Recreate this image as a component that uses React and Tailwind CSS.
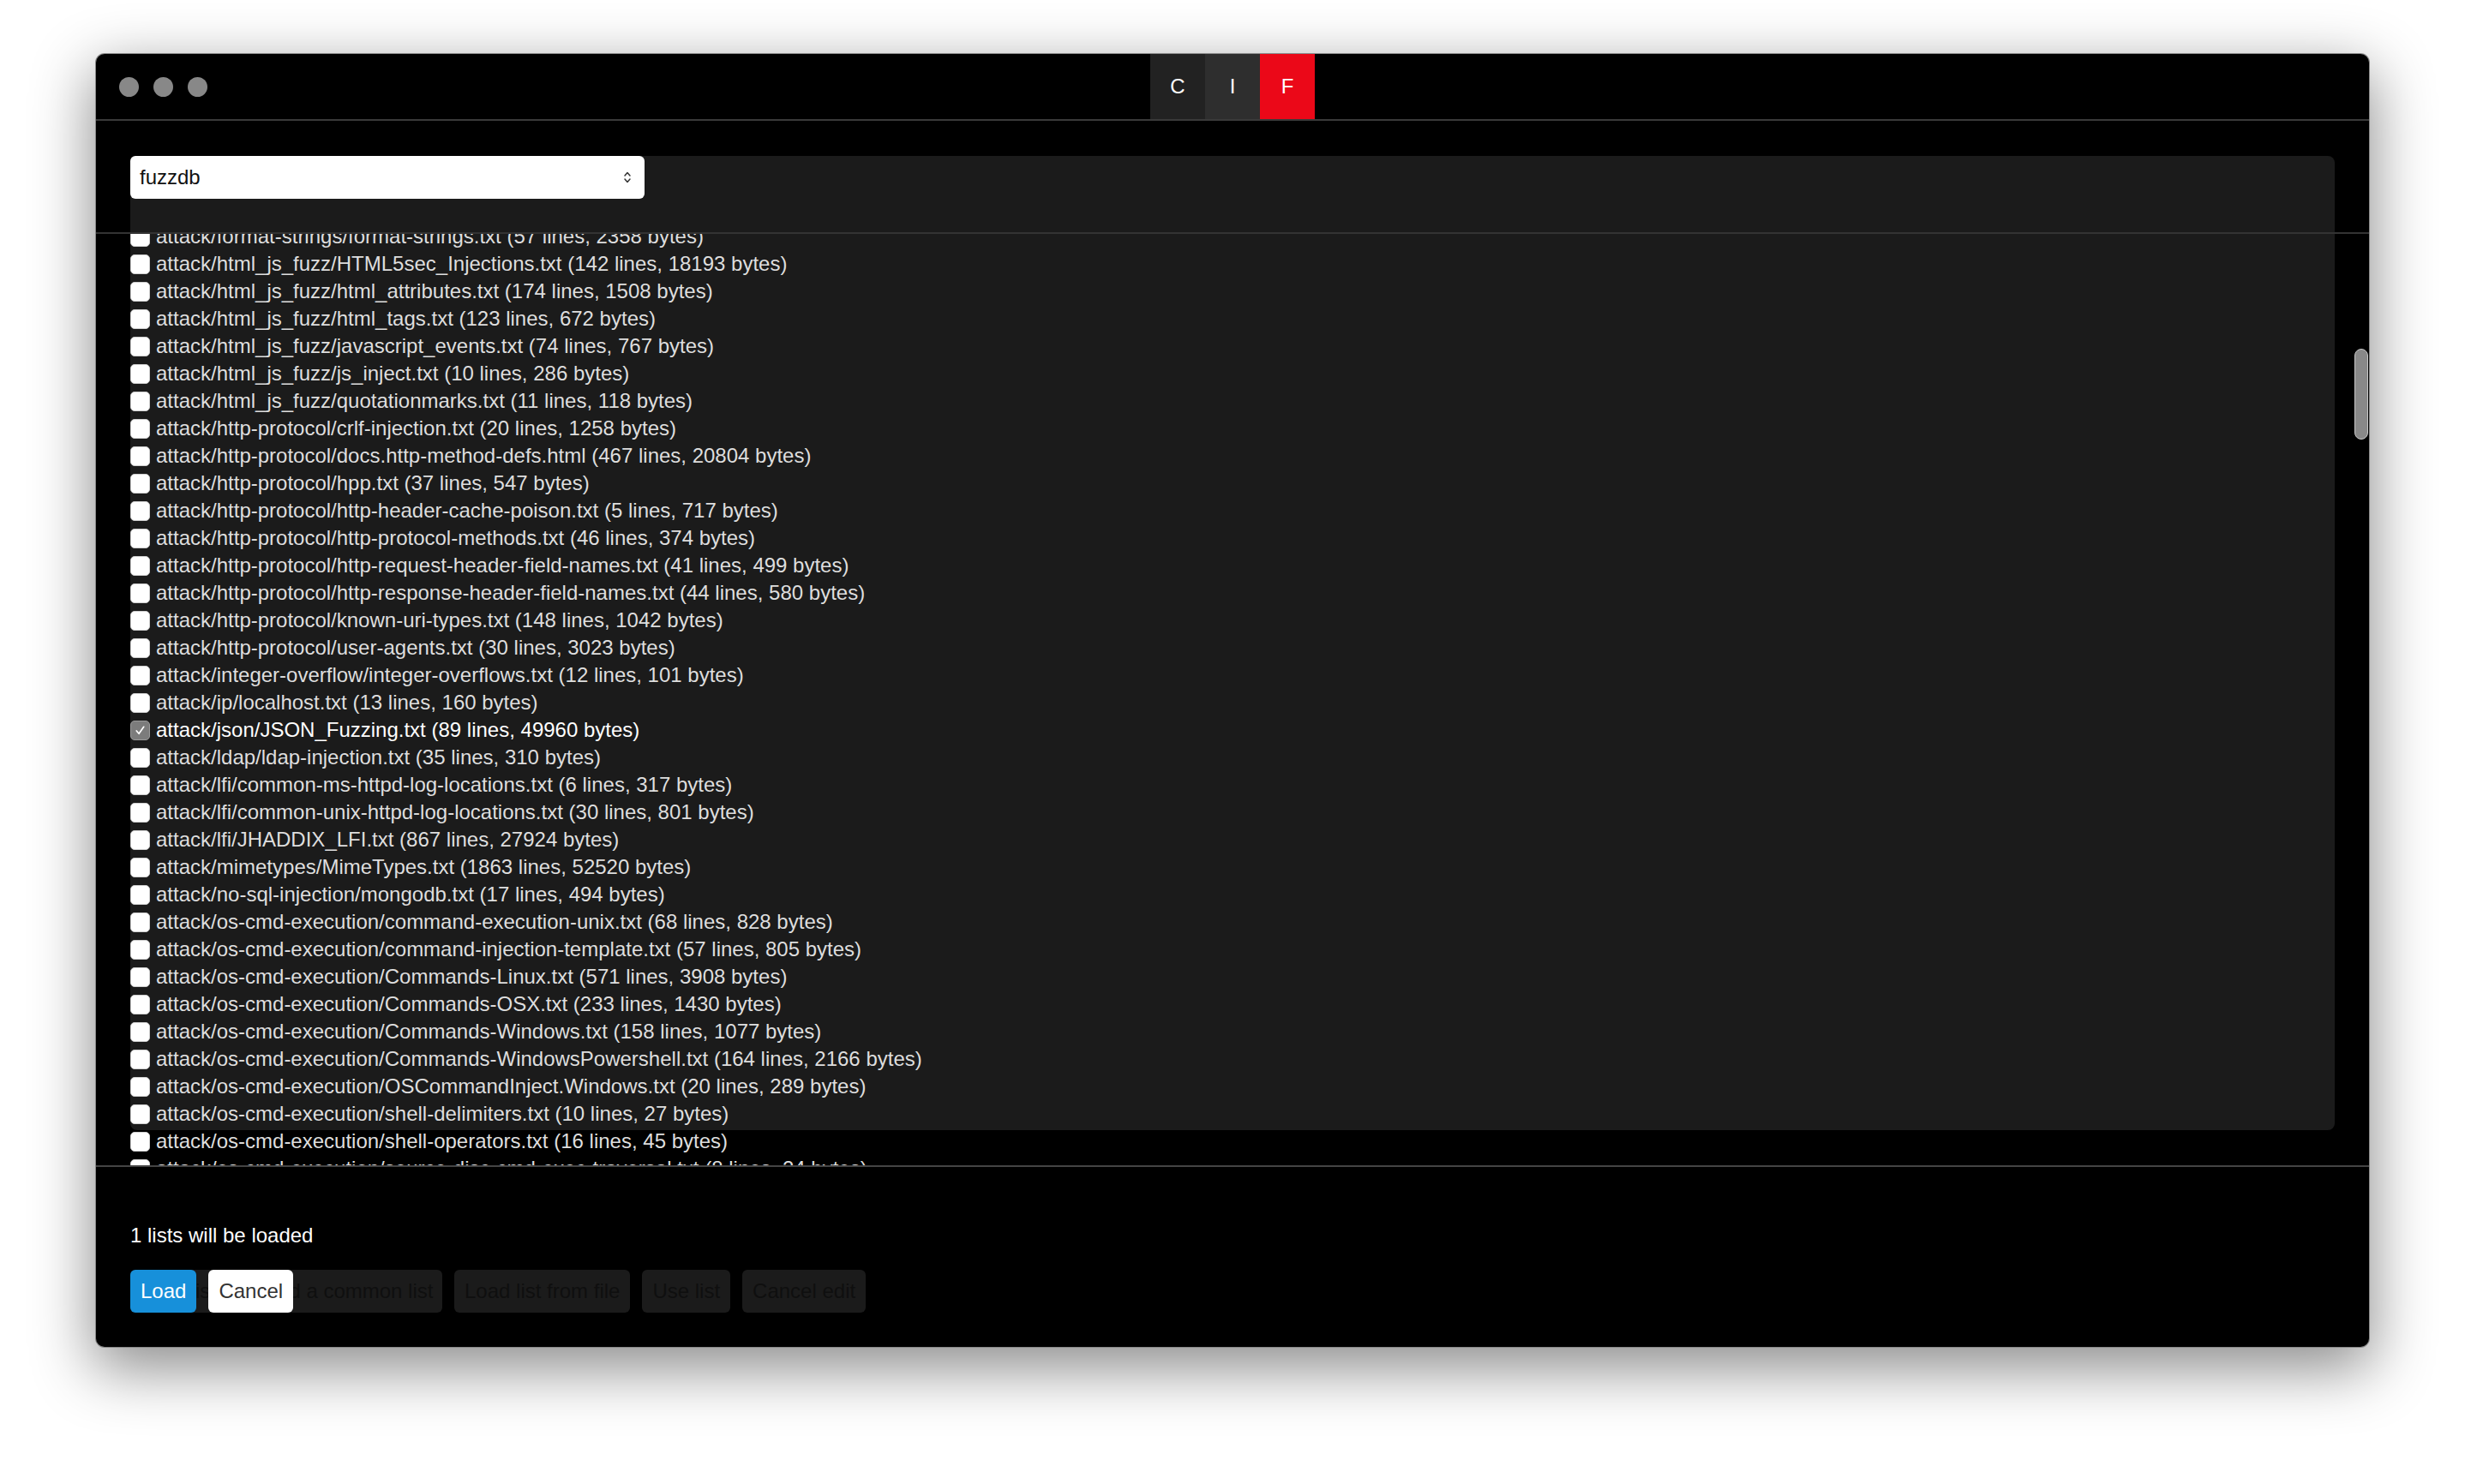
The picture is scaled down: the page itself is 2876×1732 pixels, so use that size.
import React from 'react';

const lists = [
    ['attack/format-strings/format-strings.txt', 57, 2358],
    ['attack/html_js_fuzz/HTML5sec_Injections.txt', 142, 18193],
    ['attack/html_js_fuzz/html_attributes.txt', 174, 1508],
    ['attack/html_js_fuzz/html_tags.txt', 123, 672],
    ['attack/html_js_fuzz/javascript_events.txt', 74, 767],
    ['attack/html_js_fuzz/js_inject.txt', 10, 286],
    ['attack/html_js_fuzz/quotationmarks.txt', 11, 118],
    ['attack/http-protocol/crlf-injection.txt', 20, 1258],
    ['attack/http-protocol/docs.http-method-defs.html', 467, 20804],
    ['attack/http-protocol/hpp.txt', 37, 547],
    ['attack/http-protocol/http-header-cache-poison.txt', 5, 717],
    ['attack/http-protocol/http-protocol-methods.txt', 46, 374],
    ['attack/http-protocol/http-request-header-field-names.txt', 41, 499],
    ['attack/http-protocol/http-response-header-field-names.txt', 44, 580],
    ['attack/http-protocol/known-uri-types.txt', 148, 1042],
    ['attack/http-protocol/user-agents.txt', 30, 3023],
    ['attack/integer-overflow/integer-overflows.txt', 12, 101],
    ['attack/ip/localhost.txt', 13, 160],
    ['attack/json/JSON_Fuzzing.txt', 89, 49960, true],
    ['attack/ldap/ldap-injection.txt', 35, 310],
    ['attack/lfi/common-ms-httpd-log-locations.txt', 6, 317],
    ['attack/lfi/common-unix-httpd-log-locations.txt', 30, 801],
    ['attack/lfi/JHADDIX_LFI.txt', 867, 27924],
    ['attack/mimetypes/MimeTypes.txt', 1863, 52520],
    ['attack/no-sql-injection/mongodb.txt', 17, 494],
    ['attack/os-cmd-execution/command-execution-unix.txt', 68, 828],
    ['attack/os-cmd-execution/command-injection-template.txt', 57, 805],
    ['attack/os-cmd-execution/Commands-Linux.txt', 571, 3908],
    ['attack/os-cmd-execution/Commands-OSX.txt', 233, 1430],
    ['attack/os-cmd-execution/Commands-Windows.txt', 158, 1077],
    ['attack/os-cmd-execution/Commands-WindowsPowershell.txt', 164, 2166],
    ['attack/os-cmd-execution/OSCommandInject.Windows.txt', 20, 289],
    ['attack/os-cmd-execution/shell-delimiters.txt', 10, 27],
    ['attack/os-cmd-execution/shell-operators.txt', 16, 45],
    ['attack/os-cmd-execution/source-disc-cmd-exec-traversal.txt', 8, 24],
    ['attack/os-dir-indexing/directory-indexing.txt', 25, 1014],
];

const Checkbox = ({ checked }) => (
    checked ? (
        <span className="w-[23px] h-[23px] shrink-0 rounded-[5px] bg-[#7c7c7c] border border-[#9a9a9a] flex items-center justify-center">
            <svg width="15" height="15" viewBox="0 0 16 16" fill="none">
                <path d="M3.5 8.5 L6.5 12 L12.5 3.5" stroke="#fff" strokeWidth="1.8" strokeLinecap="round" strokeLinejoin="round" />
            </svg>
        </span>
    ) : (
        <span className="w-[23px] h-[23px] shrink-0 rounded-[5px] bg-white border border-[#d0d0d0]" />
    )
);

const ListRow = ({ name, lines, bytes, checked }) => (
    <div className="h-[32px] flex items-center gap-[7px] whitespace-nowrap">
        <Checkbox checked={checked} />
        <span className={checked ? 'text-white' : 'text-[#dedede]'}>
            {name} ({lines} lines, {bytes} bytes)
        </span>
    </div>
);

const DarkButton = ({ children, className = '' }) => (
    <div className={`h-[50px] rounded-[6px] bg-[#1b1b1b] text-[#0f0f0f] flex items-center justify-center px-[12px] whitespace-nowrap ${className}`}>
        {children}
    </div>
);

export default function App() {
    return (
        <div className="w-[2876px] h-[1732px] bg-white pl-[112px] pt-[63px] font-['Liberation_Sans',Arial,sans-serif] text-[24px] leading-[28px]">
            <div className="relative w-[2652px] h-[1509px] bg-black rounded-[10px] overflow-hidden flex flex-col shadow-[0_22px_70px_4px_rgba(0,0,0,0.45)] ring-1 ring-[#8a8a8a]">
                {/* title bar */}
                <div className="h-[78px] shrink-0 border-b-2 border-[#3a3a3a] grid grid-cols-[1fr_auto_1fr]">
                    <div className="flex items-center gap-[17px] pl-[27px]">
                        <span className="w-[23px] h-[23px] rounded-full bg-[#888]" />
                        <span className="w-[23px] h-[23px] rounded-full bg-[#888]" />
                        <span className="w-[23px] h-[23px] rounded-full bg-[#888]" />
                    </div>
                    <div className="flex text-white">
                        <div className="w-[64px] bg-[#222] flex items-center justify-center">C</div>
                        <div className="w-[64px] bg-[#2e2e2e] flex items-center justify-center">I</div>
                        <div className="w-[64px] bg-[#eb0818] flex items-center justify-center">F</div>
                    </div>
                    <div />
                </div>

                {/* body */}
                <div className="relative flex-1 min-h-0 flex flex-col">
                    <div className="absolute left-[40px] right-[40px] top-[41px] bottom-[253px] rounded-[8px] bg-[#1b1b1b]" />

                    <div className="relative h-[132px] shrink-0 pt-[41px] pl-[40px] border-b-2 border-[#333]">
                        <div className="w-[600px] h-[50px] bg-white rounded-[6px] flex items-center justify-between pl-[11px] pr-[14px] text-[#111]">
                            <span>fuzzdb</span>
                            <svg width="12" height="20" viewBox="0 0 12 20" fill="none">
                                <path d="M3 8 L6 4.5 L9 8" stroke="#333" strokeWidth="1.5" strokeLinecap="round" strokeLinejoin="round" />
                                <path d="M3 12 L6 15.5 L9 12" stroke="#333" strokeWidth="1.5" strokeLinecap="round" strokeLinejoin="round" />
                            </svg>
                        </div>
                    </div>

                    <div className="relative flex-1 min-h-0 overflow-hidden pl-[40px]">
                        <div className="mt-[-13px]">
                            {lists.map(([name, lines, bytes, checked]) => (
                                <ListRow key={name} name={name} lines={lines} bytes={bytes} checked={checked} />
                            ))}
                        </div>
                    </div>

                    <div className="relative shrink-0 border-t-2 border-[#444] px-[40px] pt-[66px] pb-[40px]">
                        <div className="h-[28px] text-white">1 lists will be loaded</div>
                        <div className="relative mt-[26px]">
                            <div className="flex gap-[14px]">
                                <DarkButton className="w-[364px]">Load list and load a common list</DarkButton>
                                <DarkButton>Load list from file</DarkButton>
                                <DarkButton>Use list</DarkButton>
                                <DarkButton>Cancel edit</DarkButton>
                            </div>
                            <div className="absolute left-0 top-0 flex gap-[14px]">
                                <div className="h-[50px] px-[12px] rounded-[6px] bg-[#1790da] text-white flex items-center">Load</div>
                                <div className="h-[50px] px-[12px] rounded-[6px] bg-white text-[#333] flex items-center">Cancel</div>
                            </div>
                        </div>
                    </div>
                </div>

                {/* scrollbar thumb */}
                <div className="absolute right-[1px] top-[344px] w-[16px] h-[106px] rounded-full bg-[#888] border border-[#c8c8c8]" />
            </div>
        </div>
    );
}
